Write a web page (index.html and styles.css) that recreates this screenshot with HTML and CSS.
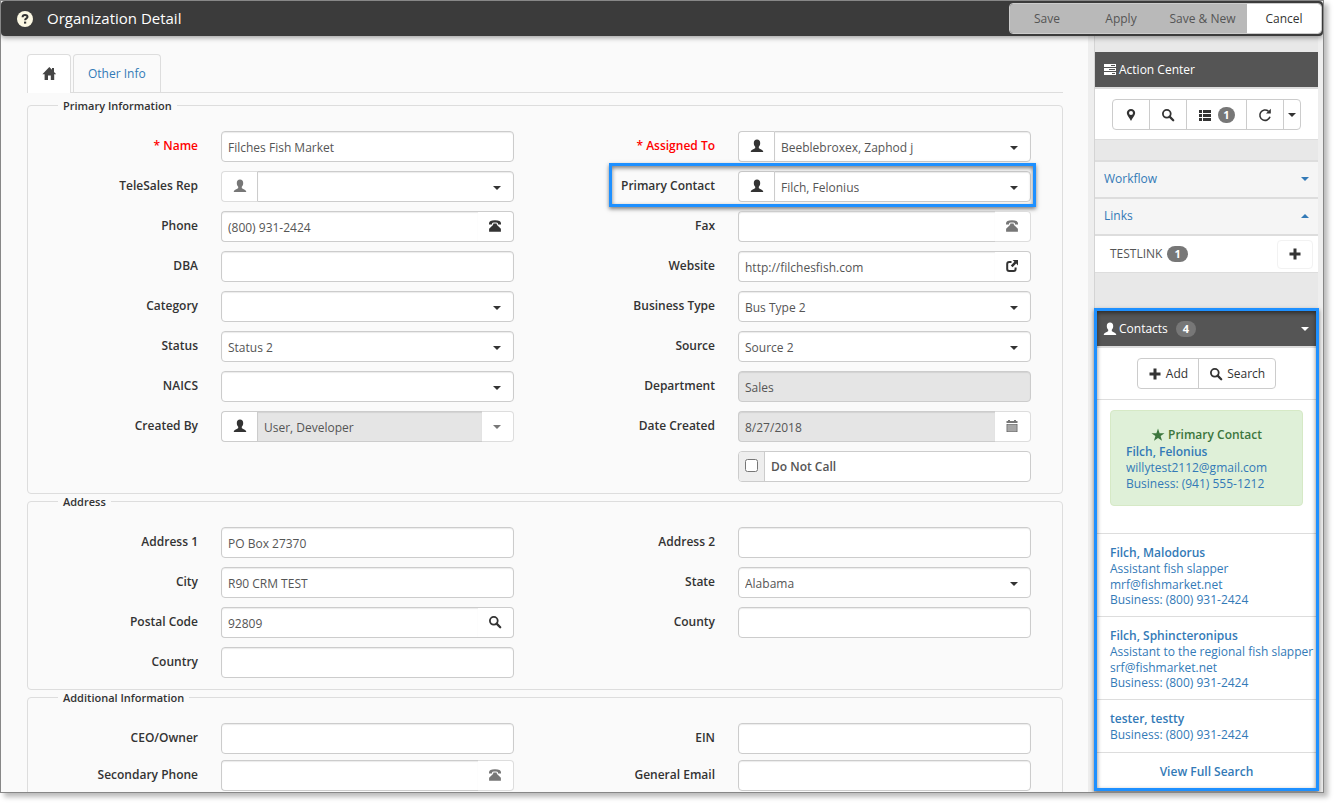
FILE: index.html
```html
<!DOCTYPE html>
<html lang="en">
<head>
  <meta charset="UTF-8">
  <meta name="viewport" content="width=device-width, initial-scale=1.0">
  <title>Organization Detail</title>
  <link rel="stylesheet" href="styles.css">
</head>
<body>
  <!-- icons -->
  <svg class="sprite" aria-hidden="true">
    <symbol id="i-home" viewBox="0 0 14 14"><path d="M7.3 0 0.4 7.2H2.6V13H6V8.6H8.8V13H12.2V7.2H14.2L12 4.9V1H10V2.8Z"/></symbol>
    <symbol id="i-user" viewBox="0 0 14 14"><path d="M7 0.6C4.9 0.6 3.8 2 3.8 4 3.8 5.7 4.4 7 5.2 7.8V9C5.2 9.8 1.1 10.4 0.8 12.4V13H13.2V12.4C12.9 10.4 8.8 9.8 8.8 9V7.8C9.6 7 10.2 5.7 10.2 4 10.2 2 9.1 0.6 7 0.6Z"/></symbol>
    <symbol id="i-phone" viewBox="0 0 14 14"><path d="M1 4.6C1 2.4 3 1.3 7 1.3S13 2.4 13 4.6V5.4H9.9V4.3C9.9 3.7 9 3.4 7 3.4S4.1 3.7 4.1 4.3V5.4H1ZM5.4 4.6H8.6L9 6 12.9 9.8V12.8H1.1V9.8L5 6Z"/></symbol>
    <symbol id="i-search" viewBox="0 0 14 14"><circle cx="5.8" cy="5.8" r="3.9" fill="none" stroke="currentColor" stroke-width="1.8"/><path d="M8.6 8.6 12.2 12.2" stroke="currentColor" stroke-width="2.3" stroke-linecap="round"/></symbol>
    <symbol id="i-share" viewBox="0 0 14 14"><path d="M6.5 2.9H4.2Q2.2 2.9 2.2 4.9V9.9Q2.2 11.9 4.2 11.9H8.6Q10.6 11.9 10.6 9.9V8.6" fill="none" stroke="currentColor" stroke-width="2"/><path d="M7.6 1H13V6.4L11.2 4.6 7.6 8.2 5.8 6.4 9.4 2.8Z"/></symbol>
    <symbol id="i-calendar" viewBox="0 0 14 14"><path d="M1.5 2H3V1H5V2H9V1H11V2H12.5V4H1.5ZM1.5 5H12.5V13H1.5Z"/><path d="M2 7H12M2 9H12M2 11H12M4 5.4V12.6M6 5.4V12.6M8 5.4V12.6M10 5.4V12.6" stroke="#fff" stroke-width=".4"/></symbol>
    <symbol id="i-pin" viewBox="0 0 14 14"><path fill-rule="evenodd" d="M7 1C4.6 1 2.8 2.8 2.8 5.1 2.8 7.5 5.6 9.8 7 13 8.4 9.8 11.2 7.5 11.2 5.1 11.2 2.8 9.4 1 7 1ZM7 3A2 2 0 1 1 7 7 2 2 0 1 1 7 3Z"/></symbol>
    <symbol id="i-list" viewBox="0 0 14 14"><path d="M1 2H4V5H1ZM5 2H13V5H5ZM1 6H4V9H1ZM5 6H13V9H5ZM1 10H4V13H1ZM5 10H13V13H5Z"/></symbol>
    <symbol id="i-refresh" viewBox="0 0 14 14"><path d="M12 8.8A5.2 5.2 0 1 1 10.4 3.2" fill="none" stroke="currentColor" stroke-width="1.6"/><path d="M12.8 0.8V5.6H8Z"/></symbol>
    <symbol id="i-tasks" viewBox="0 0 14 14"><path fill-rule="evenodd" d="M1 1H13V4H1ZM8 2V3H12V2ZM1 5H13V8H1ZM6 6V7H12V6ZM1 9H13V12H1ZM9 10V11H12V10Z"/></symbol>
    <symbol id="i-plus" viewBox="0 0 14 14"><path d="M5.5 1.5H8.5V5.5H12.5V8.5H8.5V12.5H5.5V8.5H1.5V5.5H5.5Z"/></symbol>
    <symbol id="i-star" viewBox="0 0 14 14"><path d="M7 0.6 8.6 5.2H13.5L9.6 8.1 11 12.8 7 10 3 12.8 4.4 8.1 0.5 5.2H5.4Z"/></symbol>
    <symbol id="i-caret" viewBox="0 0 8 4"><path d="M0 0H8L4 4Z"/></symbol>
    <symbol id="i-help" viewBox="0 0 16 16"><circle cx="8" cy="8" r="8" fill="#fcf8e3"/><path d="M5.6 6.2C5.6 4.7 6.6 3.9 8 3.9S10.5 4.7 10.5 6 8.1 7.5 8.1 9.3" fill="none" stroke="#333" stroke-width="2"/><path d="M7 10.6H9.2V12.6H7Z" fill="#333"/></symbol>
  </svg>

  <div class="window">
    <header class="topbar">
      <svg class="help"><use href="#i-help"/></svg>
      <h1>Organization Detail</h1>
      <div class="actions">
        <button type="button" disabled>Save</button>
        <button type="button" disabled>Apply</button>
        <button type="button" class="wide" disabled>Save &amp; New</button>
        <button type="button" class="cancel">Cancel</button>
      </div>
    </header>

    <div class="content">
      <main class="main">
        <nav class="tabs">
          <a class="tab active" href="#home" aria-label="Home"><svg class="icon"><use href="#i-home"/></svg></a>
          <a class="tab" href="#other">Other Info</a>
        </nav>

        <fieldset>
          <legend>Primary Information</legend>
          <div class="columns">
            <div class="col">
              <div class="row required">
                <label for="name">* Name</label>
                <div class="control"><input type="text" id="name" value="Filches Fish Market"></div>
              </div>
              <div class="row">
                <label for="telesales">TeleSales Rep</label>
                <div class="control">
                  <button type="button" class="before" aria-label="Open rep" disabled><svg class="icon"><use href="#i-user"/></svg></button>
                  <select id="telesales"><option></option></select>
                  <svg class="caret"><use href="#i-caret"/></svg>
                </div>
              </div>
              <div class="row">
                <label for="phone">Phone</label>
                <div class="control">
                  <input type="text" id="phone" value="(800) 931-2424">
                  <button type="button" class="after" aria-label="Call"><svg class="icon"><use href="#i-phone"/></svg></button>
                </div>
              </div>
              <div class="row">
                <label for="dba">DBA</label>
                <div class="control"><input type="text" id="dba"></div>
              </div>
              <div class="row">
                <label for="category">Category</label>
                <div class="control">
                  <select id="category"><option></option></select>
                  <svg class="caret"><use href="#i-caret"/></svg>
                </div>
              </div>
              <div class="row">
                <label for="status">Status</label>
                <div class="control">
                  <select id="status"><option>Status 2</option></select>
                  <svg class="caret"><use href="#i-caret"/></svg>
                </div>
              </div>
              <div class="row">
                <label for="naics">NAICS</label>
                <div class="control">
                  <select id="naics"><option></option></select>
                  <svg class="caret"><use href="#i-caret"/></svg>
                </div>
              </div>
              <div class="row">
                <label for="createdby">Created By</label>
                <div class="control">
                  <button type="button" class="before" aria-label="Open user"><svg class="icon"><use href="#i-user"/></svg></button>
                  <input type="text" id="createdby" value="User, Developer" disabled>
                  <button type="button" class="after narrow" aria-label="Choose user" disabled><svg class="arrow"><use href="#i-caret"/></svg></button>
                </div>
              </div>
            </div>

            <div class="col">
              <div class="row required">
                <label for="assigned">* Assigned To</label>
                <div class="control">
                  <button type="button" class="before" aria-label="Open user"><svg class="icon"><use href="#i-user"/></svg></button>
                  <select id="assigned"><option>Beeblebroxex, Zaphod j</option></select>
                  <svg class="caret"><use href="#i-caret"/></svg>
                </div>
              </div>
              <div class="row">
                <label for="contact">Primary Contact</label>
                <div class="control">
                  <button type="button" class="before" aria-label="Open contact"><svg class="icon"><use href="#i-user"/></svg></button>
                  <select id="contact"><option>Filch, Felonius</option></select>
                  <svg class="caret"><use href="#i-caret"/></svg>
                </div>
                <div class="highlight highlight-row"></div>
              </div>
              <div class="row">
                <label for="fax">Fax</label>
                <div class="control">
                  <input type="text" id="fax">
                  <button type="button" class="after" aria-label="Fax" disabled><svg class="icon"><use href="#i-phone"/></svg></button>
                </div>
              </div>
              <div class="row">
                <label for="website">Website</label>
                <div class="control">
                  <input type="text" id="website" value="http://filchesfish.com">
                  <button type="button" class="after" aria-label="Open website"><svg class="icon"><use href="#i-share"/></svg></button>
                </div>
              </div>
              <div class="row">
                <label for="bustype">Business Type</label>
                <div class="control">
                  <select id="bustype"><option>Bus Type 2</option></select>
                  <svg class="caret"><use href="#i-caret"/></svg>
                </div>
              </div>
              <div class="row">
                <label for="source">Source</label>
                <div class="control">
                  <select id="source"><option>Source 2</option></select>
                  <svg class="caret"><use href="#i-caret"/></svg>
                </div>
              </div>
              <div class="row">
                <label for="department">Department</label>
                <div class="control"><input type="text" id="department" value="Sales" disabled></div>
              </div>
              <div class="row">
                <label for="datecreated">Date Created</label>
                <div class="control">
                  <input type="text" id="datecreated" value="8/27/2018" disabled>
                  <button type="button" class="after" aria-label="Pick date" disabled><svg class="icon"><use href="#i-calendar"/></svg></button>
                </div>
              </div>
              <div class="row check-row">
                <div class="control check">
                  <span class="check-box"><input type="checkbox" id="donotcall"></span>
                  <label for="donotcall">Do Not Call</label>
                </div>
              </div>
            </div>
          </div>
        </fieldset>

        <fieldset>
          <legend>Address</legend>
          <div class="columns">
            <div class="col">
              <div class="row">
                <label for="address1">Address 1</label>
                <div class="control"><input type="text" id="address1" value="PO Box 27370"></div>
              </div>
              <div class="row">
                <label for="city">City</label>
                <div class="control"><input type="text" id="city" value="R90 CRM TEST"></div>
              </div>
              <div class="row">
                <label for="postal">Postal Code</label>
                <div class="control">
                  <input type="text" id="postal" value="92809">
                  <button type="button" class="after" aria-label="Look up postal code"><svg class="icon"><use href="#i-search"/></svg></button>
                </div>
              </div>
              <div class="row">
                <label for="country">Country</label>
                <div class="control"><input type="text" id="country"></div>
              </div>
            </div>
            <div class="col">
              <div class="row">
                <label for="address2">Address 2</label>
                <div class="control"><input type="text" id="address2"></div>
              </div>
              <div class="row">
                <label for="state">State</label>
                <div class="control">
                  <select id="state"><option>Alabama</option></select>
                  <svg class="caret"><use href="#i-caret"/></svg>
                </div>
              </div>
              <div class="row">
                <label for="county">County</label>
                <div class="control"><input type="text" id="county"></div>
              </div>
            </div>
          </div>
        </fieldset>

        <fieldset class="compact">
          <legend>Additional Information</legend>
          <div class="columns">
            <div class="col">
              <div class="row">
                <label for="ceo">CEO/Owner</label>
                <div class="control"><input type="text" id="ceo"></div>
              </div>
              <div class="row">
                <label for="phone2">Secondary Phone</label>
                <div class="control">
                  <input type="text" id="phone2">
                  <button type="button" class="after" aria-label="Call" disabled><svg class="icon"><use href="#i-phone"/></svg></button>
                </div>
              </div>
            </div>
            <div class="col">
              <div class="row">
                <label for="ein">EIN</label>
                <div class="control"><input type="text" id="ein"></div>
              </div>
              <div class="row">
                <label for="email">General Email</label>
                <div class="control"><input type="text" id="email"></div>
              </div>
            </div>
          </div>
        </fieldset>
      </main>

      <aside class="sidebar">
        <div class="rail">
          <section class="panel">
            <h2><svg class="icon"><use href="#i-tasks"/></svg>Action Center</h2>
            <div class="toolbar">
              <div class="btn-group">
                <button type="button" class="btn-icon" aria-label="Map"><svg class="icon"><use href="#i-pin"/></svg></button>
                <button type="button" class="btn-icon" aria-label="Search"><svg class="icon"><use href="#i-search"/></svg></button>
                <button type="button" class="btn-list" aria-label="List"><svg class="icon"><use href="#i-list"/></svg><span class="badge">1</span></button>
                <button type="button" class="btn-icon" aria-label="Refresh"><svg class="icon"><use href="#i-refresh"/></svg></button>
                <button type="button" class="btn-drop" aria-label="More"><svg class="arrow"><use href="#i-caret"/></svg></button>
              </div>
            </div>
          </section>

          <section class="accordion">
            <a class="accordion-head" href="#workflow">Workflow<svg class="arrow"><use href="#i-caret"/></svg></a>
            <a class="accordion-head" href="#links">Links<svg class="arrow up"><use href="#i-caret"/></svg></a>
            <div class="link-item">
              <span>TESTLINK</span><span class="badge">1</span>
              <button type="button" class="add-link" aria-label="Add link"><svg class="icon"><use href="#i-plus"/></svg></button>
            </div>
          </section>

          <section class="panel contacts">
            <h2><svg class="icon"><use href="#i-user"/></svg>Contacts<span class="badge">4</span><svg class="arrow"><use href="#i-caret"/></svg></h2>
            <div class="toolbar">
              <div class="btn-group">
                <button type="button" class="btn-text"><svg class="icon"><use href="#i-plus"/></svg>Add</button>
                <button type="button" class="btn-text"><svg class="icon"><use href="#i-search"/></svg>Search</button>
              </div>
            </div>
            <div class="primary">
              <div class="primary-card">
                <h3><svg class="icon"><use href="#i-star"/></svg>Primary Contact</h3>
                <a class="name" href="#c1">Filch, Felonius</a>
                <a class="title" href="#c1">willytest2112@gmail.com</a>
                <a href="#c1">Business: (941) 555-1212</a>
              </div>
            </div>
            <div class="contact">
              <a class="name" href="#c2">Filch, Malodorus</a>
              <a class="title" href="#c2">Assistant fish slapper</a>
              <a href="#c2">mrf@fishmarket.net</a>
              <a href="#c2">Business: (800) 931-2424</a>
            </div>
            <div class="contact">
              <a class="name" href="#c3">Filch, Sphincteronipus</a>
              <a class="title" href="#c3">Assistant to the regional fish slapper</a>
              <a href="#c3">srf@fishmarket.net</a>
              <a href="#c3">Business: (800) 931-2424</a>
            </div>
            <div class="contact">
              <a class="name" href="#c4">tester, testty</a>
              <a class="title" href="#c4">Business: (800) 931-2424</a>
            </div>
            <a class="full-search" href="#search">View Full Search</a>
            <div class="highlight highlight-panel"></div>
          </section>
        </div>
      </aside>
    </div>
  </div>
</body>
</html>
```

FILE: styles.css
```css
* {
  box-sizing: border-box;
}
body {
  margin: 0;
  padding: 0 10px 10px 0;
  height: 100vh;
  background: #fff;
  color: #333;
  font-family: "Open Sans", "Noto Sans", sans-serif;
  font-size: 12px;
  line-height: 16px;
}
h1, h2, h3 {
  margin: 0;
}
a {
  color: #337ab7;
  text-decoration: none;
}
button, input, select {
  font-family: inherit;
  font-size: 12px;
  margin: 0;
}
svg {
  fill: currentColor;
  flex: none;
}
.sprite {
  position: absolute;
  width: 0;
  height: 0;
}
.icon {
  width: 14px;
  height: 14px;
}
.arrow {
  width: 8px;
  height: 4px;
}
.arrow.up {
  transform: rotate(180deg);
}

/* window frame */
.window {
  display: flex;
  flex-direction: column;
  height: 100%;
  border: 1px solid #878787;
  background: #fafafa;
  box-shadow: 4px 4px 5px #bbb;
  overflow: hidden;
}
.topbar {
  display: flex;
  align-items: center;
  flex: none;
  height: 35px;
  padding: 0 1px 0 16px;
  background: #3b3b3b;
  color: #fff;
  border-radius: 4px;
  box-shadow: 0 2px 5px rgba(0, 0, 0, .35);
  position: relative;
  z-index: 1;
}
.help {
  width: 16px;
  height: 16px;
  margin-right: 14px;
}
.topbar h1 {
  padding-bottom: 2px;
  font-size: 15px;
  font-weight: 400;
  line-height: 20px;
}
.actions {
  display: flex;
  margin-left: auto;
  border: 1px solid #ccc;
  border-radius: 4px;
  overflow: hidden;
}
.actions button {
  width: 74px;
  height: 29px;
  padding: 0;
  border: 0;
  background: #b9b9b9;
  color: #555;
}
.actions .wide {
  width: 89px;
}
.actions .cancel {
  background: #fff;
  color: #333;
}
.content {
  display: flex;
  flex: 1;
  min-height: 0;
}

/* form */
.main {
  flex: 1;
  min-width: 0;
  padding: 18px 25px 0 26px;
}
.tabs {
  display: flex;
  gap: 2px;
  border-bottom: 1px solid #ddd;
  margin-bottom: 5px;
}
.tab {
  display: flex;
  align-items: center;
  justify-content: center;
  height: 38px;
  padding: 0 14px;
  border: 1px solid #ddd;
  border-bottom: 0;
  border-radius: 4px 4px 0 0;
}
.tab.active {
  height: 39px;
  margin-bottom: -1px;
  background: #fff;
  color: #444;
}
fieldset {
  min-width: 0;
  margin: 0;
  padding: 18px 0 11px;
  border: 1px solid #ddd;
  border-radius: 4px;
}
legend {
  margin-left: 30px;
  padding: 0 5px;
  font-size: 11px;
  font-weight: 600;
  line-height: 15px;
}
.columns {
  display: flex;
}
.col {
  flex: 1;
  min-width: 0;
  display: flex;
  flex-direction: column;
  gap: 9px;
  padding-right: 31px;
}
.compact .col {
  gap: 6px;
}
.row {
  display: flex;
  gap: 23px;
  position: relative;
}
.row > label {
  width: 170px;
  font-weight: 600;
  line-height: 29px;
  text-align: right;
}
.required > label {
  color: #f00;
}
.check-row {
  padding-left: 193px;
}
.control {
  display: flex;
  flex: 1;
  min-width: 0;
  position: relative;
}
.control input[type="text"], .control select {
  flex: 1;
  min-width: 0;
  width: 100%;
  height: 31px;
  padding: 2px 6px 0;
  border: 1px solid #ccc;
  border-radius: 4px;
  background: #fff;
  color: #555;
  box-shadow: inset 0 1px 1px rgba(0, 0, 0, .08);
  appearance: none;
}
.control input[type="text"]:disabled {
  background: #e5e5e5;
}
.control button {
  display: flex;
  align-items: center;
  justify-content: center;
  width: 36px;
  height: 31px;
  padding: 0 0 1px;
  border: 1px solid #ccc;
  background: #fff;
  color: #333;
}
.control button:disabled {
  border-color: #ddd;
  color: #777;
}
.control .before {
  border-right: 0;
  border-radius: 4px 0 0 4px;
}
.control .after {
  padding-right: 2px;
  border-left: 0;
  border-radius: 0 4px 4px 0;
}
.control .narrow {
  width: 32px;
  padding-bottom: 0;
}
.control .before + select, .control .before + input[type="text"] {
  border-radius: 0 4px 4px 0;
}
.control input[type="text"]:has(+ .after) {
  border-right: 0;
  border-radius: 4px 0 0 4px;
}
.control .before + input[type="text"]:has(+ .after) {
  border-radius: 0;
}
.caret {
  position: absolute;
  right: 13px;
  top: 15px;
  width: 8px;
  height: 4px;
  pointer-events: none;
}
.check {
  height: 31px;
  border: 1px solid #ccc;
  border-radius: 4px;
  background: #fff;
  color: #555;
}
.check-box {
  width: 26px;
  padding: 7px 0 0 6px;
  border-right: 1px solid #ccc;
  background: #eee;
  border-radius: 3px 0 0 3px;
}
.check-box input {
  display: block;
  width: 13px;
  height: 13px;
}
.check label {
  flex: 1;
  padding-left: 6px;
  font-weight: 600;
  line-height: 29px;
}

/* blue callouts */
.highlight {
  position: absolute;
  border: 3px solid #1e90ff;
  box-shadow: 0 2px 4px rgba(0, 0, 0, .5), inset 0 2px 4px rgba(0, 0, 0, .5);
  pointer-events: none;
}
.highlight-row {
  top: -8px;
  right: -5px;
  bottom: -5px;
  left: 64px;
}
.highlight-panel {
  top: -3px;
  right: -1px;
  bottom: 0;
  left: -1px;
}

/* side rail */
.sidebar {
  display: flex;
  flex: none;
  width: 235px;
  padding: 0 5px 0 6px;
  background: #eee;
}
.rail {
  display: flex;
  flex-direction: column;
  flex: 1;
  min-width: 0;
  padding-top: 16px;
  background: #e8e8e8;
  border-left: 1px solid #d4d4d4;
}
.panel {
  background: #fff;
  border-bottom: 1px solid #ddd;
}
.panel h2 {
  display: flex;
  align-items: center;
  gap: 2px;
  height: 35px;
  padding: 0 9px 0 8px;
  background: #555;
  color: #fff;
  font-size: 12px;
  font-weight: 400;
}
.panel h2 .badge {
  margin-left: 6px;
}
.panel h2 .arrow {
  margin-left: auto;
}
.toolbar {
  display: flex;
  justify-content: center;
  height: 52px;
  padding-top: 10px;
  border-top: 2px solid #ddd;
}
.btn-group {
  display: flex;
  height: 31px;
  border: 1px solid #ccc;
  border-radius: 4px;
}
.btn-group button {
  display: flex;
  align-items: center;
  justify-content: center;
  gap: 6px;
  padding: 0;
  border: 0;
  border-left: 1px solid #ccc;
  background: none;
  color: #333;
}
.btn-group .btn-icon {
  width: 37px;
}
.btn-group button:first-child {
  border-left: 0;
}
.btn-group .btn-icon:first-child {
  width: 36px;
}
.btn-group .btn-list {
  width: 60px;
}
.btn-group .btn-drop {
  width: 17px;
}
.btn-group .btn-text {
  gap: 4px;
  padding: 0 10px;
}
.badge {
  min-width: 16px;
  padding: 0 6px;
  border-radius: 8px;
  background: #777;
  color: #fff;
  font-size: 11px;
  font-weight: 700;
  line-height: 16px;
  text-align: center;
}
.btn-list .badge {
  padding: 0 5px;
}
.accordion {
  margin: 20px 0 38px;
}
.accordion-head {
  display: flex;
  align-items: center;
  justify-content: space-between;
  height: 37px;
  padding: 0 9px 1px;
  background: #f5f5f5;
  border-top: 2px solid #ddd;
}
.link-item {
  display: flex;
  align-items: center;
  gap: 5px;
  height: 39px;
  padding: 0 5px 0 15px;
  background: #fff;
  border-top: 2px solid #ddd;
  border-bottom: 1px solid #ddd;
  color: #555;
}
.link-item .badge, .panel h2 .badge {
  padding: 0 7px;
}
.add-link {
  display: flex;
  align-items: center;
  justify-content: center;
  width: 36px;
  height: 29px;
  margin-left: auto;
  padding: 0;
  border: 1px solid #f2f2f2;
  border-radius: 4px;
  background: #fff;
  color: #333;
}

/* contacts */
.contacts {
  flex: 1;
  position: relative;
}
.contacts .toolbar {
  height: 53px;
}
.primary {
  height: 134px;
  padding: 10px 15px 0;
  border-top: 1px solid #ddd;
}
.primary-card {
  padding: 15px 15px 14px;
  border: 1px solid #d6e9c6;
  border-radius: 4px;
  background: #dff0d8;
}
.primary-card h3 {
  display: flex;
  align-items: center;
  justify-content: center;
  gap: 3px;
  color: #3c763d;
  font-size: 12px;
  font-weight: 600;
  line-height: 18px;
}
.primary-card a, .contact a {
  display: block;
  line-height: 15px;
  white-space: nowrap;
}
.primary-card .name, .contact .name {
  font-weight: 600;
  line-height: 16px;
}
.primary-card .title, .contact .title {
  line-height: 16px;
}
.contact {
  padding: 11px 0 9px 15px;
  border-top: 1px solid #ddd;
}
.full-search {
  display: block;
  padding-top: 11px;
  border-top: 1px solid #ddd;
  font-weight: 600;
  text-align: center;
}
```
